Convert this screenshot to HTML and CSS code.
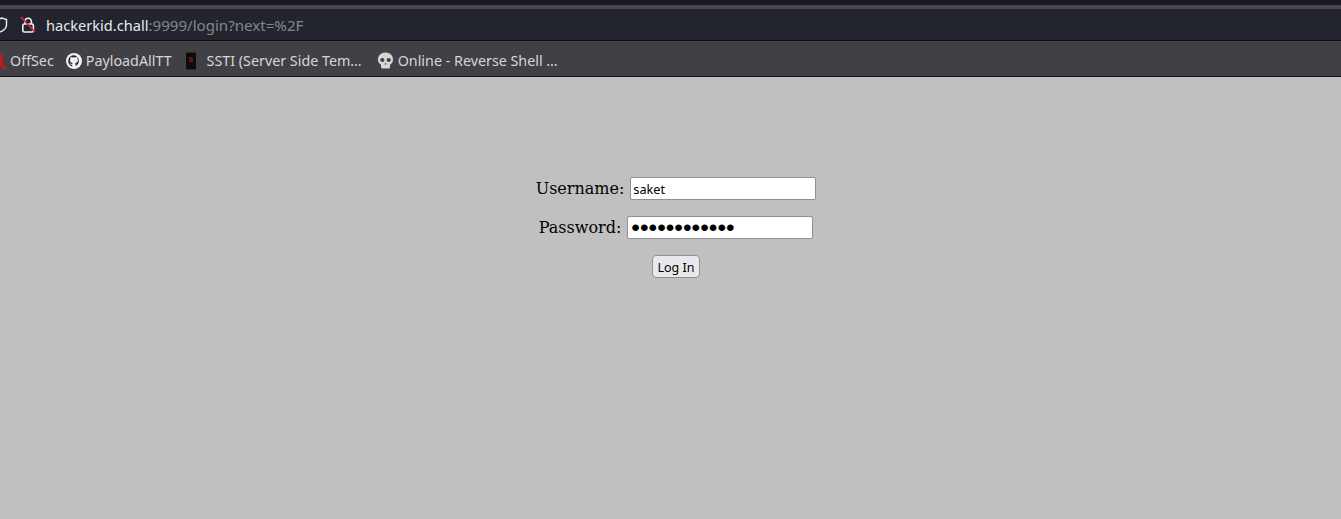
FILE: index.html
```html
<!DOCTYPE html>
<html>
<head>
<meta charset="UTF-8">
  <title>Login</title>
  <link rel="stylesheet" href="styles.css">
</head>
<body>
  <header class="browser">
    <div class="strip"></div>
    <div class="url-bar">
      <svg class="shield" width="8" height="18" viewBox="0 0 8 18"><path d="M-3 3.500 L2 2 L6.500 3.500 V9 C6.500 12 4 14.500 0 16" fill="none" stroke="#e8e8ea" stroke-width="1.500"/></svg>
      <svg class="lock" width="16" height="18" viewBox="0 0 16 18"><path d="M5 8 V5.500 A3.200 3.200 0 0 1 11.400 5.500 V8" fill="none" stroke="#f0f0f2" stroke-width="1.600"/><rect x="2.800" y="8" width="10.600" height="8" rx="1.500" fill="none" stroke="#f0f0f2" stroke-width="1.600"/><path d="M1 1 L15 16" stroke="#d6224c" stroke-width="1.800"/></svg>
      <div class="url"><span class="host">hackerkid.chall</span>:9999/login?next=%2F</div>
    </div>
    <nav class="bookmarks">
      <svg class="bm-icon offsec" width="10" height="20" viewBox="0 0 10 20"><path d="M-2 17 L1 2 H2.500 L3 14 L8 17.500 H3 L1 15 Z" fill="#c9181e"/></svg>
      <span class="bm-label first">OffSec</span>
      <svg class="bm-icon github" width="16" height="16" viewBox="0 0 16 16"><circle cx="8" cy="8" r="8" fill="#f2f2f2"/><path d="M8 2.200a5.800 5.800 0 0 0-1.800 11.300v-1.700c-1.600.3-2-.7-2.100-1.100-.1-.2-.5-.8-.7-1 .5-.1.9.4 1.100.7.6 1 1.500.7 1.800.5 0-.4.2-.7.4-.9-1.400-.2-2.700-.7-2.700-3 0-.7.2-1.200.6-1.600 0-.2-.2-.8.1-1.600 0 0 .5-.2 1.700.6a5.600 5.600 0 0 1 3.100 0c1.200-.8 1.700-.6 1.700-.6.3.8.1 1.400.1 1.600.4.400.6.900.6 1.600 0 2.300-1.400 2.800-2.700 3 .2.200.4.600.4 1.100v2A5.800 5.800 0 0 0 8 2.200z" fill="#26262b"/></svg>
      <span class="bm-label">PayloadAllTT</span>
      <svg class="bm-icon ssti" width="12" height="18" viewBox="0 0 12 18"><rect x="1" y="0.500" width="10" height="17" rx="1.500" fill="#0c0c0e"/><rect x="4" y="5" width="4" height="5" fill="#5a1512"/></svg>
      <span class="bm-label">SSTI (Server Side Tem…</span>
      <svg class="bm-icon skull" width="17" height="17" viewBox="0 0 17 17"><path d="M8.500 0.500C4 .5 1 3.500 1 7.500c0 2.500 1.200 4.200 3 5.200V15c0 .8.600 1.500 1.400 1.500h6.200c.8 0 1.400-.7 1.400-1.500v-2.300c1.800-1 3-2.700 3-5.200 0-4-3-7-7.500-7z" fill="#d6d6d8"/><circle cx="5.300" cy="8" r="2.100" fill="#414145"/><circle cx="11.700" cy="8" r="2.100" fill="#414145"/><path d="M8.500 10.500l1 2h-2z" fill="#414145"/></svg>
      <span class="bm-label">Online - Reverse Shell …</span>
    </nav>
  </header>

  <main class="page">
    <form class="login-form">
      <div class="form-row">
        <label for="username">Username:</label>
        <input type="text" id="username" value="saket">
      </div>
      <div class="form-row">
        <label for="password">Password:</label>
        <input type="password" id="password" class="secret" value="saketsaket12">
      </div>
      <button type="button">Log In</button>
    </form>
  </main>
</body>
</html>
```

FILE: styles.css
```css
html, body {
  height: 100%;
}

body {
  margin: 0;
  display: flex;
  flex-direction: column;
  overflow: hidden;
  background-color: #c0c0c0;
}

.browser {
  font-family: 'Noto Sans', 'Open Sans', sans-serif;
  font-size: 14.3px;
}

.strip {
  height: 5px;
  background-color: #18181e;
  border-bottom: 4px solid #47474b;
}

.url-bar {
  height: 32px;
  box-sizing: border-box;
  display: flex;
  align-items: center;
  background-color: #23252e;
  border-bottom: 1px solid #0e0e12;
}

.shield {
  flex: none;
}

.lock {
  flex: none;
  margin-left: 12px;
}

.url {
  margin-left: 10px;
  font-size: 15.1px;
  color: #85858c;
  white-space: nowrap;
}

.host {
  font-size: 14.6px;
  color: #e8e8ea;
}

.bookmarks {
  height: 36px;
  box-sizing: border-box;
  padding-top: 4px;
  display: flex;
  align-items: center;
  background-color: #414145;
  border-bottom: 1px solid #111114;
  color: #d6d6d8;
  white-space: nowrap;
}

.bm-icon {
  flex: none;
}

.bm-label {
  margin-left: 4px;
}

.bm-label.first {
  margin-left: 0;
  margin-right: 12px;
}

.ssti {
  margin-left: 13px;
}

.ssti + .bm-label {
  margin-left: 10px;
}

.skull {
  margin-left: 15px;
}

.page {
  flex: 1;
  padding-left: 11px;
  background-color: #c0c0c0;
}

.login-form {
  margin-top: 100px;
  text-align: center;
  font-family: 'DejaVu Serif', serif;
  font-size: 16px;
  color: #000;
}

.form-row {
  height: 23px;
  margin-bottom: 16px;
  display: flex;
  justify-content: center;
  align-items: center;
  gap: 6px;
}

.form-row input {
  width: 186px;
  height: 23px;
  box-sizing: border-box;
  padding: 1px 2px;
  border: 1px solid #8f8f9d;
  border-radius: 2px;
  background-color: #fff;
  font-family: 'Noto Sans', sans-serif;
  font-size: 12.7px;
  color: #000;
}

.form-row input.secret {
  padding-left: 3px;
  font-family: 'Liberation Sans', sans-serif;
  font-size: 24.6px;
}

button {
  width: 48px;
  height: 23px;
  padding: 1px 0 0;
  border: 1px solid #8f8f9d;
  border-radius: 4px;
  background-color: #e9e9ed;
  font-family: 'Noto Sans', sans-serif;
  font-size: 12.5px;
  color: #000;
  cursor: pointer;
}
```
